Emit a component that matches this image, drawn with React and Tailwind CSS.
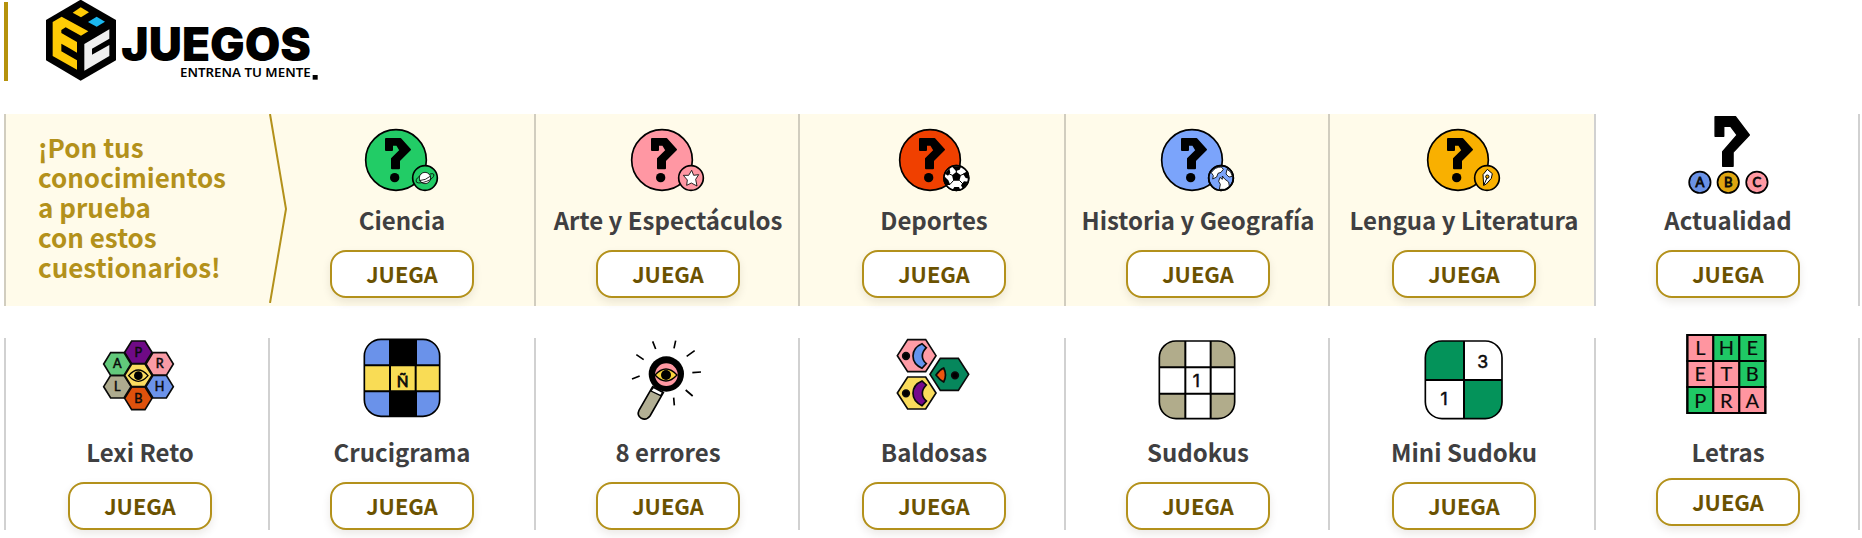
const FONT = "font-['Noto_Sans_CJK_JP','Source_Sans_Pro',sans-serif]";

/* Icons are drawn on a grid three times finer than the page. */
function Art({ dx, dy, sx = 3, h, children }) {
  return (
    <svg
      className={h === 96 ? 'h-24 w-[120px] shrink-0 overflow-visible' : 'h-[88px] w-[120px] shrink-0 overflow-visible'}
      viewBox={`-60 0 120 ${h}`}
      aria-hidden="true"
    >
      <g transform={`translate(${dx} ${dy}) scale(${1 / sx} ${1 / 3})`}>{children}</g>
    </svg>
  );
}

function Letter({ x, y, size, children, w = 400, ink = 1.5, family = 'Lato, sans-serif' }) {
  return (
    <text x={x} y={y} fontSize={size} fontWeight={w} fontFamily={family} textAnchor="middle" fill="#0a0a0a" stroke="#0a0a0a" strokeWidth={ink}>
      {children}
    </text>
  );
}

function Quiz({ color, shift = 0, badgeShift = 0, children }) {
  return (
    <Art dx={-102 + shift} dy={-9} h={88}>
      <circle cx="288" cy="165" r="91" fill={color} stroke="#000" strokeWidth="5" />
      <path
        d="M258 102H301L330 134L297 167V190H276V161L301 136L291 119H276V135H258Z"
        fill="#000"
        stroke="#000"
        strokeWidth="6"
        strokeLinejoin="round"
      />
      <circle cx="284" cy="218" r="14" />
      <g transform={`translate(${badgeShift} 0)`}>
        <circle cx="375" cy="219" r="37" fill={color} stroke="#000" strokeWidth="5" />
        {children}
      </g>
    </Art>
  );
}

const hex = (cx, cy, w, h, t) =>
  `${cx - t},${cy - h} ${cx + t},${cy - h} ${cx + w},${cy} ${cx + t},${cy + h} ${cx - t},${cy + h} ${cx - w},${cy}`;

const Ciencia = () => (
  <Quiz color="#22cc66">
    <circle cx="375" cy="219" r="17" fill="#fff" stroke="#000" strokeWidth="2.5" />
    <path d="M359 213Q344 224 350 232Q358 237 380 229Q402 220 402 209Q400 204 390 207M358 227Q377 226 392 213" fill="none" stroke="#000" strokeWidth="2.5" />
  </Quiz>
);
const Arte = () => (
  <Quiz color="#ff97a3">
    <path d="M377 196L383 211L398 209L389 223L393 243L376 234L362 241L364 225L352 211L368 211Z" fill="#fff" stroke="#000" strokeWidth="2.5" strokeLinejoin="round" />
  </Quiz>
);
const Deportes = () => (
  <Quiz color="#f04000" shift={2} badgeShift={-8}>
    <circle cx="375" cy="219" r="37" fill="#fff" stroke="#000" strokeWidth="5" />
    <path d="M362 211L375 201L389 211L384 227H366ZM361 184H390L385 194L374 198ZM410 197L414 221L403 219L395 206ZM410 230L395 252L389 241L398 229ZM388 257H362L369 246H383ZM342 240L338 213L351 226L357 240ZM341 206L354 190L357 203L350 212Z" />
    <path d="M375 203V192M388 211L400 206M384 226L396 238M367 226L356 238M363 211L350 205" stroke="#000" strokeWidth="3" />
  </Quiz>
);
const Historia = () => (
  <Quiz color="#7ba4fb">
    <path d="M346 203Q356 186 376 186L382 193L375 202L366 205L362 216L350 222L352 212Z" fill="#fff" stroke="#000" strokeWidth="2.5" />
    <path d="M372 217L379 223L379 213L386 222L398 231L400 244L387 253L370 253L373 238L368 229Z" fill="#fff" stroke="#000" strokeWidth="2.5" />
    <path d="M393 193Q407 199 409 214L399 216L390 207Z" fill="#fff" stroke="#000" strokeWidth="2.5" />
    <circle cx="375" cy="219" r="37" fill="none" stroke="#000" strokeWidth="5" />
  </Quiz>
);
const Lengua = () => (
  <Quiz color="#f9b000">
    <path d="M365 241L363 209L376 193L391 206L388 220L373 237Z" fill="#fff" stroke="#000" strokeWidth="3" strokeLinejoin="round" />
    <path d="M365 241L376 217" stroke="#000" strokeWidth="3" />
    <circle cx="376" cy="215" r="5" fill="#f9b000" stroke="#000" strokeWidth="3" />
  </Quiz>
);
const Actualidad = () => (
  <Art dx={-408} dy={-9} sx={2.893} h={88}>
    <path d="M1143 35H1202L1242 90L1195 142V184H1165V140L1207 90L1188 64H1168V94H1143Z" stroke="#000" strokeWidth="4" strokeLinejoin="round" />
    {[
      [1099, 'A', '#6a92e6'],
      [1181, 'B', '#e0a610'],
      [1264, 'C', '#ff98a2'],
    ].map(([x, c, f]) => (
      <g key={c}>
        <ellipse cx={x} cy="232" rx="31" ry="32" fill={f} stroke="#000" strokeWidth="5" />
        <Letter x={x} y={246} size={38} ink={2.5}>{c}</Letter>
      </g>
    ))}
  </Art>
);

const Eye = ({ cx, cy, w, h, iris, fill }) => (
  <g>
    <path d={`M${cx - w} ${cy}Q${cx} ${cy - h * 2} ${cx + w} ${cy}Q${cx} ${cy + h * 2} ${cx - w} ${cy}Z`} fill={fill} stroke="#000" strokeWidth="4" />
    <circle cx={cx} cy={cy} r={iris} />
  </g>
);

const Lexi = () => (
  <Art dx={-140} dy={-13} h={96}>
    {[
      [415, 82, '#6f0a86', 'P'],
      [479, 117, '#f99ba5', 'R'],
      [479, 185, '#6c93ea', 'H'],
      [415, 220, '#df510c', 'B'],
      [352, 185, '#aeab8e', 'L'],
      [352, 117, '#62c97b', 'A'],
      [415, 151, '#fbdc60', ''],
    ].map(([x, y, f, c]) => (
      <g key={x + c}>
        <polygon points={hex(x, y, 41, 34, 20)} fill={f} stroke="#0a0a0a" strokeWidth="5" />
        {c && <Letter x={x} y={y + 13} size={38}>{c}</Letter>}
      </g>
    ))}
    <Eye cx={415} cy={152} w={29} h={17} iris={13} fill="#fbdc60" />
  </Art>
);

const Crucigrama = () => (
  <Art dx={-137} dy={-13} h={96}>
    <clipPath id="cross"><rect x="298" y="43" width="226" height="231" rx="50" /></clipPath>
    <g clipPath="url(#cross)">
      <rect x="296" y="41" width="232" height="236" fill="#6a92ea" />
      <rect x="296" y="121" width="232" height="78" fill="#f9dc55" />
      <rect x="372" y="41" width="84" height="80" />
      <rect x="372" y="199" width="84" height="80" />
      <path d="M296 121H528M296 199H528M375 121V199M452 121V199" stroke="#000" strokeWidth="6" />
    </g>
    <rect x="298" y="43" width="226" height="231" rx="50" fill="none" stroke="#000" strokeWidth="5" />
    <Letter x={413} y={185} size={46} ink={2.5}>Ñ</Letter>
  </Art>
);

const Errores = () => (
  <Art dx={-138} dy={-13} h={96}>
    <path
      d="M368 49L377 72M437 47L432 70M494 77L470 94M319 89L341 104M329 153L306 162M487 143L513 141M467 195L488 213M431 218L433 241"
      stroke="#000"
      strokeWidth="5"
    />
    <path d="M368 185L400 203L360 273Q349 287 334 280Q320 271 327 256Z" fill="#b2af94" stroke="#000" strokeWidth="5" />
    <path d="M370 187L398 202L392 212L363 198Z" fill="#fff" stroke="#000" strokeWidth="4" />
    <circle cx="409" cy="147" r="53" />
    <circle cx="409" cy="149" r="34" fill="#ff98a2" />
    <Eye cx={408} cy={150} w={33} h={18} iris={15} fill="#f9d33c" />
  </Art>
);

const Baldosas = () => (
  <Art dx={-139} dy={-13} h={96}>
    {[
      [0, '#ff9ca6', '#6394ee'],
      [112, '#fadc5c', '#76088c'],
    ].map(([dy, a, b]) => (
      <g key={dy} transform={`translate(0 ${dy})`} stroke="#0a0a0a" strokeWidth="5">
        <polygon points={hex(365, 92, 58, 48, 27)} fill={a} />
        <circle cx="333" cy="93" r="10" />
        <path d="M381 56C362 64 354 78 354 93C354 108 362 121 381 130L394 116Q382 106 382 93Q382 80 394 68Z" fill={b} />
      </g>
    ))}
    <g stroke="#0a0a0a" strokeWidth="5">
      <polygon points={hex(463, 148, 58, 48, 27)} fill="#06875c" />
      <path d="M446 129Q434 134 423 150Q434 165 446 171Q457 150 446 129Z" fill="#ec5710" />
      <circle cx="480" cy="151" r="10" />
    </g>
  </Art>
);

const Sudokus = () => (
  <Art dx={-138} dy={-13} h={96}>
    <clipPath id="sud"><rect x="298" y="48" width="226" height="233" rx="50" /></clipPath>
    <g clipPath="url(#sud)">
      <rect x="296" y="46" width="230" height="238" fill="#b1ac8b" />
      <path d="M376 46H452V127H526V206H452V284H376V206H296V127H376Z" fill="#fff" />
      <path d="M376 46V284M452 46V284M296 127H526M296 206H526" stroke="#000" strokeWidth="6" />
    </g>
    <rect x="298" y="48" width="226" height="233" rx="50" fill="none" stroke="#000" strokeWidth="5" />
    <Letter x={409} y={186} size={53} family="Inter, sans-serif">1</Letter>
  </Art>
);

const MiniSudoku = () => (
  <Art dx={-139} dy={-13} h={96}>
    <clipPath id="mini"><rect x="301" y="48" width="230" height="233" rx="50" /></clipPath>
    <g clipPath="url(#mini)">
      <rect x="299" y="46" width="118" height="119" fill="#04935a" />
      <rect x="417" y="165" width="118" height="119" fill="#04935a" />
      <path d="M417 46V284M299 165H535" stroke="#000" strokeWidth="6" />
    </g>
    <rect x="301" y="48" width="230" height="233" rx="50" fill="none" stroke="#000" strokeWidth="5" />
    <Letter x={473} y={129} size={53} family="Inter, sans-serif">3</Letter>
    <Letter x={357} y={241} size={53} family="Inter, sans-serif">1</Letter>
  </Art>
);

const Letras = () => (
  <Art dx={-136} dy={-13} h={96}>
    {['LHE', 'ETB', 'PRA'].map((row, r) =>
      [...row].map((c, i) => (
        <g key={`${r}${i}`}>
          <rect
            x={286 + i * 78}
            y={30 + r * 78}
            width="78"
            height="78"
            fill={['011', '001', '100'][r][i] === '1' ? '#1fc865' : '#ff95a0'}
            stroke="#000"
            strokeWidth="6"
          />
          <Letter x={325 + i * 78} y={90 + r * 79} size={60} ink={0.5}>{c}</Letter>
        </g>
      )),
    )}
    <rect x="286" y="30" width="234" height="234" fill="none" stroke="#000" strokeWidth="6" />
  </Art>
);

const CELL = 'flex h-48 flex-col items-center border-l-2 border-black/18 ';

const quizzes = [
  { name: 'Ciencia', Icon: Ciencia, cell: 'bg-[#fffbea] border-transparent' },
  { name: 'Arte y Espectáculos', Icon: Arte, cell: 'bg-[#fffbea] pl-0.5' },
  { name: 'Deportes', Icon: Deportes, cell: 'bg-[#fffbea] pl-1' },
  { name: 'Historia y Geografía', Icon: Historia, cell: 'bg-[#fffbea] pl-0.5' },
  { name: 'Lengua y Literatura', Icon: Lengua, cell: 'bg-[#fffbea] pl-1' },
  { name: 'Actualidad', Icon: Actualidad, cell: 'border-r-2 pl-0.5' },
];

const games = [
  { name: 'Lexi Reto', Icon: Lexi, cell: 'pl-1.5' },
  { name: 'Crucigrama', Icon: Crucigrama, cell: '' },
  { name: '8 errores', Icon: Errores, cell: 'pl-0.5' },
  { name: 'Baldosas', Icon: Baldosas, cell: 'pl-1' },
  { name: 'Sudokus', Icon: Sudokus, cell: 'pl-0.5' },
  { name: 'Mini Sudoku', Icon: MiniSudoku, cell: 'pl-1' },
  { name: 'Letras', Icon: Letras, cell: 'border-r-2 pl-0.5', raised: true },
];

function Card({ name, Icon, cell, raised }) {
  return (
    <article className={CELL + cell}>
      <Icon />
      <h2 className={`${raised ? 'h-11' : 'h-12'} text-[24px] leading-[36px] font-bold whitespace-nowrap text-[#3f3f41]`}>{name}</h2>
      <button className="h-12 w-36 shrink-0 rounded-2xl border-2 border-[#b3911b] bg-white pb-0.5 text-[21.8px] leading-[39px] font-bold text-[#6b5200] shadow-[0_4px_8px_rgba(60,40,0,0.1)]">
        JUEGA
      </button>
    </article>
  );
}

function Logo() {
  return (
    <svg className="h-[90px] w-[330px]" viewBox="24 0 990 270" aria-label="Juegos. Entrena tu mente">
      <polygon points="242,-1 348,60 348,181 242,242 138,181 138,60" />
      <polygon points="242,22 267,37 243,52 218,38" fill="#ffcb05" />
      <polygon points="290,50 315,65 290,80 264,66" fill="#1bb8f0" />
      <polygon points="158,66 185,50 265,94 243,107 197,82 184,90 184,99 231,126 231,158 207,144 184,131 184,154 231,181 231,209 158,168" fill="#ffcb05" />
      <polygon points="253,132 328,88 328,116 276,146 276,164 328,135 328,168 253,212" fill="#efefef" />
      <text x="364" y="183" fontFamily="Inter, sans-serif" fontWeight="900" fontSize="139" textLength="569" lengthAdjust="spacingAndGlyphs">JUEGOS</text>
      <text x="540" y="231" fontFamily="Noto Sans, sans-serif" fontWeight="600" fontSize="39" textLength="392" lengthAdjust="spacingAndGlyphs">ENTRENA TU MENTE</text>
      <rect x="938" y="225" width="15" height="14" />
    </svg>
  );
}

const GRID = 'grid grid-cols-[264px_266px_264px_266px_264px_266px_266px]';

export default function App() {
  return (
    <main className={`h-[538px] w-[1862px] overflow-hidden bg-white pl-1 ${FONT}`}>
      <header className="flex h-[114px] items-start">
        <div className="mt-0.5 h-[79px] w-1 bg-[#b5920c]" />
        <Logo />
      </header>
      <section className={GRID}>
        <div className="relative h-48 border-l-2 border-black/18 bg-[#fffbea] pt-[18px] pl-8">
          <p className="text-[26px] leading-[30px] font-bold whitespace-pre text-[#b3911b]">
            {'¡Pon tus\nconocimientos\na prueba\ncon estos\ncuestionarios!'}
          </p>
          <svg className="absolute top-0 left-full z-10 h-[189px] w-5" viewBox="0 0 20 189" aria-hidden="true">
            <path d="M2 0L18 95L2 189" fill="none" stroke="#b3911b" strokeWidth="2" />
          </svg>
        </div>
        {quizzes.map((q) => <Card key={q.name} {...q} />)}
      </section>
      <section className={`mt-8 ${GRID}`}>
        {games.map((g) => <Card key={g.name} {...g} />)}
      </section>
    </main>
  );
}
